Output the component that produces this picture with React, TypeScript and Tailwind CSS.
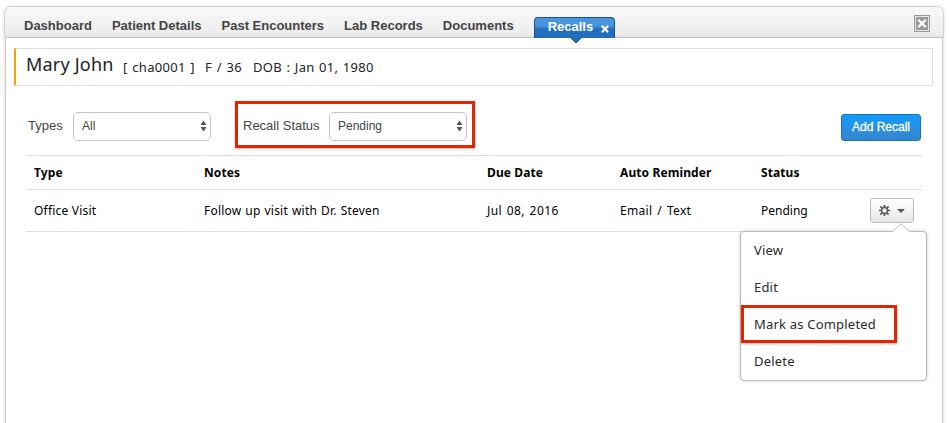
import React from "react";

const tabs = ["Dashboard", "Patient Details", "Past Encounters", "Lab Records", "Documents"];

function Stepper() {
  return (
    <svg width="7" height="12" viewBox="0 0 7 12" className="fill-[#555]">
      <path d="M3.5 0.5 6.5 5H0.5zM0.5 7h6L3.5 11.5z" />
    </svg>
  );
}

function Select({ value }: { value: string }) {
  return (
    <div className="flex h-[29px] w-[138px] items-center justify-between rounded-[5px] border border-[#c6c6c6] bg-white pr-[3px] pl-2 text-[12px] text-[#444]">
      <span>{value}</span>
      <Stepper />
    </div>
  );
}

function Gear() {
  return (
    <svg width="11" height="11" viewBox="0 0 11 11" fill="none" stroke="#555">
      <circle cx="5.5" cy="5.5" r="3" strokeWidth="1.4" />
      <path
        d="M5.5 0v2M5.5 9v2M0 5.5h2M9 5.5h2M1.4 1.4 3 3M8 8l1.6 1.6M1.4 9.6 3 8M8 3l1.6-1.6"
        strokeWidth="1.7"
      />
    </svg>
  );
}

function RowMenu() {
  return (
    <div className="absolute top-[33px] right-[-13px] h-[150px] w-[187px] rounded-[4px] border border-[#bbb] bg-white pl-[13px] text-[13px] tracking-[0.2px] text-[#2a2a2a] shadow-[0_0_3px_rgba(0,0,0,0.22)]">
      <svg className="absolute -top-[9px] right-[15px]" width="20" height="10" viewBox="0 0 20 10">
        <path d="M0.5 10 10 0.8 19.5 10z" fill="#fff" />
        <path d="M1 9 10 0.8 19 9" fill="none" stroke="#bbb" />
      </svg>
      <div className="flex h-[37px] items-center">View</div>
      <div className="flex h-[37px] items-center">Edit</div>
      <div className="relative flex h-[37px] items-center">
        <div className="absolute -top-px -left-[13px] h-[38px] w-[156px] border-[3px] border-[#e32400] shadow-[0_1px_2px_rgba(0,0,0,0.3)]" />
        Mark as Completed
      </div>
      <div className="flex h-[37px] items-center">Delete</div>
    </div>
  );
}

export default function App() {
  return (
    <div className="h-[423px] w-[949px] overflow-hidden bg-white pt-[6px] pl-[4px] font-['Noto_Sans',sans-serif]">
      <header className="flex h-8 w-[940px] rounded-t-[7px] border border-[#d2d2d2] bg-linear-to-b from-[#f9f9f9] to-[#ebebeb] pl-[19px] font-['Liberation_Sans',sans-serif] text-[13px] font-bold text-[#444] shadow-[0_0_3px_rgba(0,0,0,0.15)]">
        <nav className="flex gap-5 pt-[9px] leading-5">
          {tabs.map((t) => (
            <span key={t}>{t}</span>
          ))}
        </nav>
        <div className="relative mt-[10px] ml-5 flex h-[21px] w-[81px] items-center rounded-t-[4px] border border-b-0 border-[#1c528f] bg-linear-to-b from-[#4a94dc] from-40% to-[#226fc0] to-55% pl-[13px] text-white">
          <span className="-mt-[2px]">Recalls</span>
          <svg className="mt-px ml-[8px]" width="8" height="8" viewBox="0 0 8 8">
            <path d="M0.8 0.8 7.2 7.2M7.2 0.8 0.8 7.2" stroke="#fff" strokeWidth="2" />
          </svg>
          <svg className="absolute top-[19px] left-[35px]" width="12" height="7" viewBox="0 0 12 7">
            <path d="M0.5 0.5 6 6 11.5 0.5" fill="#226fc0" stroke="#1c528f" />
          </svg>
        </div>
        <svg className="mt-[8px] mr-[13px] ml-auto" width="16" height="17" viewBox="0 0 16 17">
          <rect width="16" height="17" fill="#999" />
          <rect x="1.5" y="1.5" width="13" height="14" fill="#999" stroke="#e8e8e8" />
          <path d="m4.3 4.8 7.4 7.4M11.7 4.8l-7.4 7.4" stroke="#fff" strokeWidth="2.3" />
        </svg>
      </header>

      <main className="ml-px h-[400px] w-[938px] border-x border-[#d0d0d0] bg-white px-[8px] pt-[10px] shadow-[0_0_3px_rgba(0,0,0,0.2)]">
        <div className="flex h-[38px] w-[919px] border border-l-2 border-[#ddd] border-l-[#f5a300] pl-[10px] text-[#222]">
          <span className="w-[97px] text-[18px] leading-[31px] tracking-[0.2px] whitespace-nowrap">Mary John</span>
          <span className="w-[82px] text-[13px] leading-[37px] tracking-[0.3px] [word-spacing:1px] whitespace-nowrap">[ cha0001 ]</span>
          <span className="w-[48px] text-[13px] leading-[37px] tracking-[0.3px] [word-spacing:1px] whitespace-nowrap">F / 36</span>
          <span className="text-[13px] leading-[37px] tracking-[0.25px] [word-spacing:1px]">DOB : Jan 01, 1980</span>
        </div>

        <div className="mt-[15px] flex h-[47px] items-center pl-[14px] font-['Liberation_Sans',sans-serif] text-[13px] text-[#444]">
          <span className="mt-[2px] w-[45px]">Types</span>
          <div className="mt-[3px]">
            <Select value="All" />
          </div>
          <div className="ml-6 flex h-[47px] w-[240px] items-center border-[3px] border-[#e32400] pl-[5px] shadow-[0_1px_2px_rgba(0,0,0,0.3)]">
            <span className="mt-[2px] w-[86px]">Recall Status</span>
            <div className="mt-[3px]">
              <Select value="Pending" />
            </div>
          </div>
          <button className="mt-[6px] mr-[13px] ml-auto h-[27px] w-[80px] rounded-[3px] border border-[#1c74bd] bg-linear-to-b from-[#0c9bfb] to-[#3385cc] pb-[2px] text-[12px] text-white [-webkit-text-stroke:0.3px_#fff]">
            Add Recall
          </button>
        </div>

        <div className="mt-[7px] ml-[12px] w-[896px] border-y border-[#ddd] text-[12px] text-black">
          <div className="grid h-[33px] grid-cols-[170px_283px_133px_141px_1fr] items-center pl-2 font-bold tracking-[0.1px]">
            <span>Type</span>
            <span>Notes</span>
            <span>Due Date</span>
            <span>Auto Reminder</span>
            <span>Status</span>
          </div>
          <div className="grid h-[42px] grid-cols-[170px_283px_133px_141px_1fr] items-center border-t border-[#ddd] pl-2 tracking-[0.2px]">
            <span>Office Visit</span>
            <span className="[word-spacing:0.7px]">Follow up visit with Dr. Steven</span>
            <span className="tracking-[0.45px] [word-spacing:1px]">Jul 08, 2016</span>
            <span className="tracking-[0.3px] [word-spacing:1.5px]">Email / Text</span>
            <div className="flex items-center justify-between pr-2">
              <span className="tracking-normal">Pending</span>
              <div className="relative">
                <button className="flex h-[25px] w-[44px] items-center justify-center gap-[7px] rounded-[3px] border border-[#bbb] bg-linear-to-b from-white to-[#e6e6e6]">
                  <Gear />
                  <svg width="8" height="4" viewBox="0 0 8 4">
                    <path d="M0 0h8L4 4z" fill="#555" />
                  </svg>
                </button>
                <RowMenu />
              </div>
            </div>
          </div>
        </div>
      </main>
    </div>
  );
}
